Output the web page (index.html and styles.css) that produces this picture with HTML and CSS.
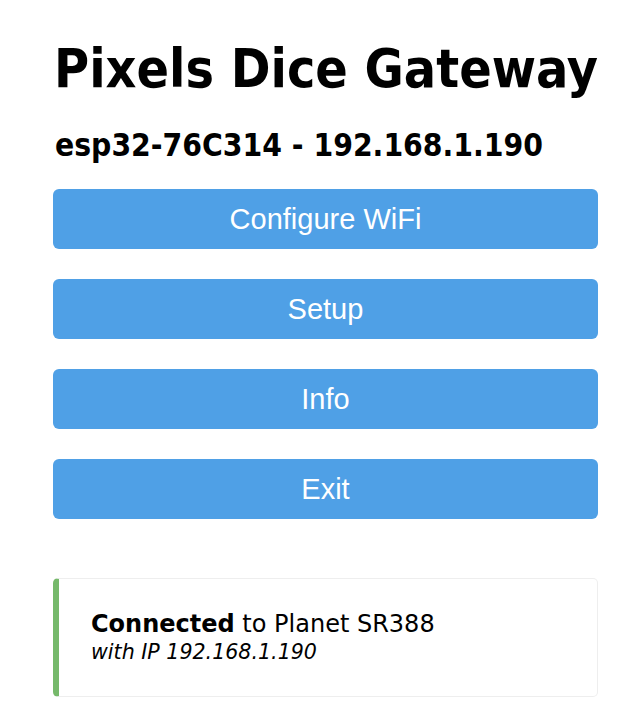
FILE: index.html
```html
<!DOCTYPE html>
<html>
<head>
<meta charset="utf-8">
<link rel="stylesheet" href="styles.css">
</head>
<body>
<div class="wrap">
  <h1 class="title">Pixels Dice Gateway</h1>
  <h3 class="host">esp32-76C314 - 192.168.1.190</h3>
  <div class="menu">
    <button class="btn">Configure WiFi</button>
    <button class="btn">Setup</button>
    <button class="btn">Info</button>
    <button class="btn">Exit</button>
  </div>
  <div class="msg">
    <div class="msg-line"><strong>Connected</strong> to Planet SR388</div>
    <div class="msg-sub">with IP 192.168.1.190</div>
  </div>
</div>
</body>
</html>
```
FILE: styles.css
```css
html, body {
  margin: 0;
  padding: 0;
  background: #fff;
}
body {
  font-family: "DejaVu Sans", Verdana, sans-serif;
  color: #000;
}
.wrap {
  margin-left: 53px;
  width: 545px;
  padding-top: 39px;
}
.title {
  margin: 0 0 0 1px;
  font-size: 53.3px;
  line-height: 60px;
  font-weight: bold;
  font-stretch: condensed;
  white-space: nowrap;
}
.host {
  margin: 28px 0 0 2px;
  font-size: 31.5px;
  line-height: 36px;
  font-weight: bold;
  font-stretch: condensed;
  white-space: nowrap;
}
.menu {
  margin-top: 26px;
  display: flex;
  flex-direction: column;
  gap: 30px;
}
.btn {
  display: block;
  width: 100%;
  height: 60px;
  border: 0;
  border-radius: 6px;
  background: #4fa0e6;
  color: #fff;
  font-family: "Liberation Sans", Arial, sans-serif;
  font-size: 29px;
  line-height: 60px;
  padding: 0;
  text-align: center;
}
.msg {
  margin-top: 59px;
  height: 119px;
  box-sizing: border-box;
  border: 1px solid #eee;
  border-left: 6px solid #76b96b;
  border-radius: 5px;
  padding: 30px 0 0 32px;
  display: flex;
  flex-direction: column;
}
.msg-line {
  font-size: 24px;
  line-height: 30px;
}
.msg-sub {
  font-size: 20.6px;
  font-style: italic;
  line-height: 26px;
}
```
